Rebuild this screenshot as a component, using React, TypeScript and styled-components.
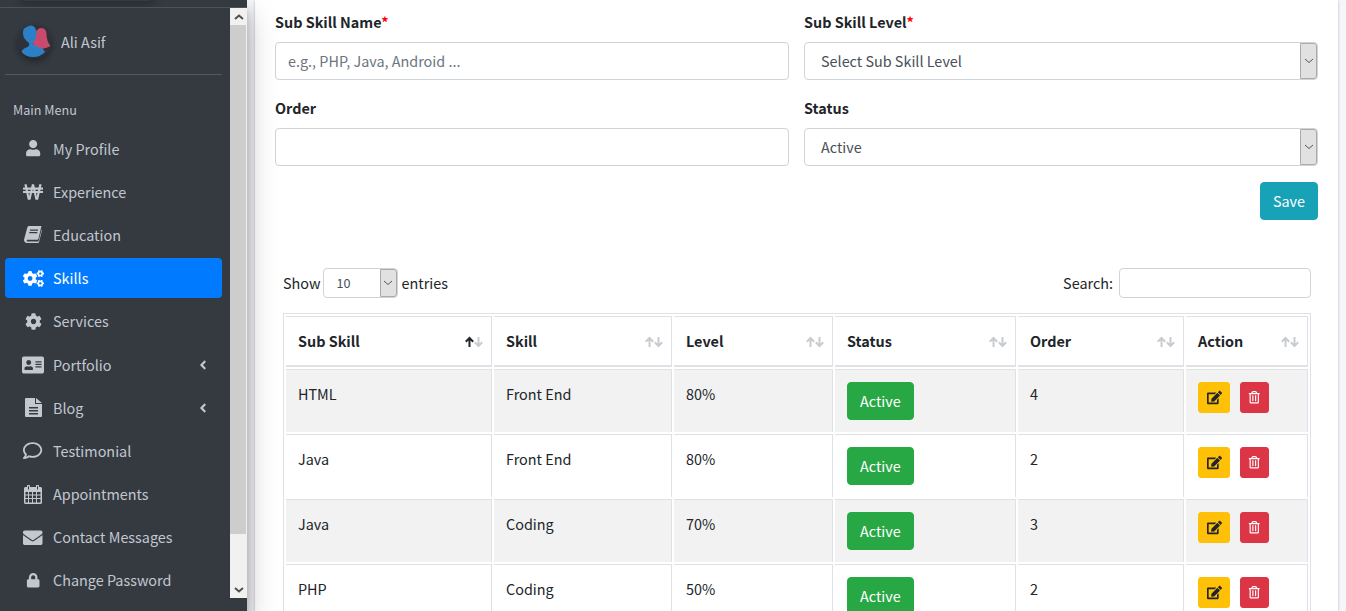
import React from "react";
import styled, { createGlobalStyle } from "styled-components";
import {
  FaUser, FaWonSign, FaCogs, FaCog, FaAddressCard, FaRegComment,
  FaEnvelope, FaLock, FaAngleLeft, FaEdit, FaRegTrashAlt,
} from "react-icons/fa";

const FONT = `"Noto Sans CJK SC", "Noto Sans", "Liberation Sans", sans-serif`;

const Global = createGlobalStyle`
  * { box-sizing: border-box; }
  html, body { margin: 0; height: 100%; overflow: hidden; }
  body { font-family: ${FONT}; font-size: 14.4px; line-height: 24px; color: #212529; background: #f4f6f9; }
`;

const Page = styled.div`
  display: flex;
  height: 611px;
  overflow: hidden;
`;

const Sidebar = styled.aside`
  position: relative;
  z-index: 2;
  flex: 0 0 247px;
  background: #343a40;
  box-shadow: 0 14px 28px rgba(0,0,0,.25), 0 10px 10px rgba(0,0,0,.22);
  display: flex;
  flex-direction: column;
`;

const Brand = styled.div`
  flex: 0 0 8px;
  border-bottom: 1px solid #4b545c;
  overflow: hidden;
`;

const BrandShadow = styled.div`
  width: 126px;
  height: 1px;
  margin: 0 0 0 24px;
  box-shadow: 0 0 8px 4px rgba(0,0,0,.25);
`;

const SideBody = styled.div`
  display: flex;
  align-items: flex-start;
  height: 603px;
`;

const SideContent = styled.div`
  flex: 0 0 230px;
  overflow: hidden;
`;

const UserPanel = styled.div`
  display: flex;
  align-items: center;
  gap: 10px;
  margin: 0 8px 0 5px;
  padding: 17px 0 16px 13px;
  border-bottom: 1px solid #4f5962;
  color: #c2c7d0;
`;

const Avatar = styled.svg`
  width: 33px;
  height: 33px;
  display: block;
  border-radius: 50%;
  box-shadow: 0 3px 6px rgba(0,0,0,.16), 0 3px 6px rgba(0,0,0,.23);
`;

const MenuTitle = styled.div`
  margin: 24px 0 8.6px 13px;
  font-size: 12.6px;
  line-height: 21px;
  color: #c2c7d0;
`;

const NavList = styled.nav`
  display: flex;
  flex-direction: column;
  gap: 3.2px;
  margin: 0 8px 0 5px;
`;

const NavItem = styled.a<{ $active?: boolean }>`
  display: flex;
  align-items: center;
  height: 40px;
  padding: 0 12px 0 8px;
  border-radius: 4px;
  color: ${(p) => (p.$active ? "#fff" : "#c2c7d0")};
  background: ${(p) => (p.$active ? "#007bff" : "transparent")};
`;

const NavIcon = styled.span`
  flex: 0 0 40px;
  display: flex;
  justify-content: center;
  align-items: center;
`;

const NavLabel = styled.span`
  flex: 1;
`;

const ScrollTrack = styled.div`
  flex: 0 0 17px;
  height: 590px;
  background: #f1f1f1;
  display: flex;
  flex-direction: column;
`;

const ScrollButton = styled.div`
  flex: 0 0 17px;
  display: flex;
  align-items: center;
  justify-content: center;
`;

const ScrollThumb = styled.div`
  flex: 0 0 509px;
  background: #cdcdcd;
  margin-right: 1px;
`;

const ScrollRest = styled.div`
  flex: 1;
`;

const Main = styled.main`
  flex: 1;
  padding-left: 8px;
  padding-right: 8px;
  min-width: 0;
`;

const Card = styled.section`
  background: #fff;
  height: 100%;
  padding: 10px 20px 0;
  box-shadow: 0 0 1px rgba(0,0,0,.125), 0 1px 3px rgba(0,0,0,.2);
  overflow: hidden;
`;

const FormGrid = styled.div`
  display: grid;
  grid-template-columns: 514px 514px;
  column-gap: 15px;
`;

const Field = styled.div`
  margin-bottom: 16px;
`;

const Label = styled.label`
  display: block;
  margin-bottom: 8px;
  font-weight: 700;
`;

const Req = styled.span`
  color: #f00;
`;

const TextInput = styled.input`
  display: block;
  width: 100%;
  height: 38px;
  padding: 5px 12px 7px;
  border: 1px solid #ced4da;
  border-radius: 4px;
  background: #fff;
  color: #495057;
  font: 14.4px/24px ${FONT};
  &::placeholder { color: #6c757d; opacity: 1; }
`;

const SelectWrap = styled.div<{ $w?: number }>`
  position: relative;
  width: ${(p) => (p.$w ? `${p.$w}px` : "100%")};
`;

const ShowSelectWrap = styled(SelectWrap)`
  margin: 0 1px 0 -1px;
`;

const NativeSelect = styled.select<{ $small?: boolean }>`
  display: block;
  width: 100%;
  height: ${(p) => (p.$small ? 30 : 38)}px;
  padding: 0 20px 0 ${(p) => (p.$small ? 13 : 16)}px;
  border: 1px solid #ced4da;
  border-radius: 4px;
  background: #fff;
  color: #495057;
  appearance: none;
  font: ${(p) => (p.$small ? 12.6 : 14.4)}px/24px ${FONT};
`;

const SelectArrow = styled.span`
  position: absolute;
  top: 1px;
  right: 1px;
  bottom: 1px;
  width: 17px;
  display: flex;
  align-items: center;
  justify-content: center;
  background: #e1e1e1;
  border: 1px solid #ababab;
  border-top-right-radius: 3px;
  border-bottom-right-radius: 3px;
`;

const Actions = styled.div`
  display: flex;
  justify-content: flex-end;
`;

const Button = styled.button<{ $bg: string; $fg?: string }>`
  height: 38px;
  padding: 0 12px;
  border: 1px solid ${(p) => p.$bg};
  border-radius: 4px;
  background: ${(p) => p.$bg};
  color: ${(p) => p.$fg || "#fff"};
  font: 14.4px/24px ${FONT};
`;

const IconButton = styled.button<{ $bg: string; $fg: string; $w: number }>`
  width: ${(p) => p.$w}px;
  height: 31px;
  padding: 0;
  border: 1px solid ${(p) => p.$bg};
  border-radius: 3px;
  background: ${(p) => p.$bg};
  color: ${(p) => p.$fg};
  display: inline-flex;
  align-items: center;
  justify-content: center;
`;

const Tools = styled.div`
  display: flex;
  justify-content: space-between;
  align-items: center;
  height: 30px;
  margin: 48px 7px 15px 8px;
`;

const ToolGroup = styled.label`
  display: flex;
  align-items: center;
  gap: 3px;
`;

const SearchInput = styled(TextInput)`
  width: 192px;
  height: 30px;
  margin-left: 3px;
`;

const Table = styled.table`
  table-layout: fixed;
  width: 1028px;
  margin-left: 8px;
  border: 1px solid #dee2e6;
  border-collapse: separate;
  border-spacing: 2px;
`;

const Th = styled.th<{ $w: number }>`
  position: relative;
  width: ${(p) => p.$w}px;
  height: 51px;
  padding: 12px;
  text-align: left;
  vertical-align: middle;
  font-weight: 700;
  border-top: 1px solid #dee2e6;
  border-right: 1px solid #dee2e6;
  border-bottom: 2px solid #dee2e6;
`;

const SortMark = styled.svg`
  position: absolute;
  right: 8px;
  top: 19px;
  width: 18px;
  height: 12px;
`;

const Row = styled.tr<{ $odd: boolean }>`
  background: ${(p) => (p.$odd ? "#f2f2f2" : "transparent")};
`;

const Td = styled.td`
  height: 63px;
  padding: 12px;
  vertical-align: top;
  border-top: 1px solid #dee2e6;
  border-right: 1px solid #dee2e6;
  background: inherit;
`;

const ActionCell = styled.div`
  display: flex;
  gap: 10px;
`;

const Chevron = ({ up, dark }: { up?: boolean; dark?: boolean }) => (
  <svg width="10" height="6" viewBox="0 0 10 6" fill="none">
    <path
      d={up ? "M1 5L5 1.5L9 5" : "M1 1L5 4.5L9 1"}
      stroke={dark ? "#505050" : "#555"}
      strokeWidth={dark ? 2 : 1}
    />
  </svg>
);

const Sort = ({ active }: { active?: boolean }) => (
  <SortMark viewBox="0 0 18 12" fill="none" strokeWidth="2">
    <path d="M4.500 11V2M.8 5.700L4.500 2L8.200 5.700" stroke={active ? "#212529" : "#c8ccd0"} />
    <path d="M13.500 1V10M9.800 6.300L13.500 10L17.200 6.300" stroke="#c8ccd0" />
  </SortMark>
);

const BlogIcon = () => (
  <svg width="17" height="19" viewBox="0 0 17 19">
    <path
      fill="#c2c7d0"
      fillRule="evenodd"
      d="M1 0H10V6H17V18A1 1 0 0 1 16 19H1A1 1 0 0 1 0 18V1A1 1 0 0 1 1 0ZM11 0L17 5H11ZM4 9V10.500H13V9ZM4 12V13.500H13V12ZM4 15V16.500H13V15Z"
    />
  </svg>
);

const BookIcon = () => (
  <svg width="18" height="17" viewBox="0 0 18 17">
    <path
      fill="#c2c7d0"
      fillRule="evenodd"
      d="M5 0H17.500L14.500 12.500C14.300 13.300 13.700 13.800 13 13.800H3.500C2.500 13.800 2.400 15.500 3.500 15.500H14.500L17.700 3.500L18 4.500L15 16C14.900 16.600 14.400 17 13.800 17H3C1 17 -.5 15 .2 13L3.300 1.500C3.600 .6 4.200 0 5 0ZM6 3.500V4.700H14V3.500ZM5.300 6V7.200H13.300V6Z"
    />
  </svg>
);

const CalendarIcon = () => (
  <svg width="18" height="19" viewBox="0 0 18 19">
    <path
      fill="#c2c7d0"
      fillRule="evenodd"
      d="M3 2V1A1 1 0 0 1 6 1V2H12V1A1 1 0 0 1 15 1V2H16.500C17.300 2 18 2.700 18 3.500V17.500C18 18.300 17.300 19 16.500 19H1.500C.7 19 0 18.300 0 17.500V3.500C0 2.700 .7 2 1.500 2ZM4 1.200V4.500H5V1.200ZM13 1.200V4.500H14V1.200ZM1.500 7V9.500H4V7ZM5 7V9.500H8V7ZM9 7V9.500H12V7ZM13 7V9.500H16.500V7ZM1.500 10.500V13H4V10.500ZM5 10.500V13H8V10.500ZM9 10.500V13H12V10.500ZM13 10.500V13H16.500V10.500ZM1.500 14V17.500H4V14ZM5 14V17.500H8V14ZM9 14V17.500H12V14ZM13 14V17.500H16.500V14Z"
    />
  </svg>
);

const nav: { label: string; icon: React.ReactNode; active?: boolean; sub?: boolean }[] = [
  { label: "My Profile", icon: <FaUser size={16.3} /> },
  { label: "Experience", icon: <FaWonSign size={20} /> },
  { label: "Education", icon: <BookIcon /> },
  { label: "Skills", icon: <FaCogs size={21} />, active: true },
  { label: "Services", icon: <FaCog size={17} /> },
  { label: "Portfolio", icon: <FaAddressCard size={22} />, sub: true },
  { label: "Blog", icon: <BlogIcon />, sub: true },
  { label: "Testimonial", icon: <FaRegComment size={19.2} /> },
  { label: "Appointments", icon: <CalendarIcon /> },
  { label: "Contact Messages", icon: <FaEnvelope size={19.5} /> },
  { label: "Change Password", icon: <FaLock size={14.4} /> },
];

const columns = [
  { t: "Sub Skill", w: 206 },
  { t: "Skill", w: 178 },
  { t: "Level", w: 159 },
  { t: "Status", w: 181 },
  { t: "Order", w: 166 },
  { t: "Action", w: 122 },
];

const rows = [
  ["HTML", "Front End", "80%", "4"],
  ["Java", "Front End", "80%", "2"],
  ["Java", "Coding", "70%", "3"],
  ["PHP", "Coding", "50%", "2"],
];

export default function App() {
  return (
    <Page>
      <Global />
      <Sidebar>
        <Brand>
          <BrandShadow />
        </Brand>
        <SideBody>
          <SideContent>
            <UserPanel>
              <Avatar viewBox="0 0 33 33">
                <circle cx="16.500" cy="16.500" r="16.500" fill="#2d3238" />
                <path fill="#c94a6c" d="M23 3C27 3 28.500 6 28.500 9C28.500 14 30 18 32.500 21C29 23 26 23.500 24 24L25 27L17 24L14 14C17 8 19 3 23 3Z" />
                <path fill="#2b80c8" d="M11.500 0C16 0 18.500 3.500 18.500 8.500C18.500 12.500 17 15.500 15 17.500C15 20 17 21 20 22C23.500 23 26 24.500 27 27C24 30 20 32 15 32C10 32 6 30 3 27.500C4.500 24 7 23 9.500 22C11.500 21 11.500 19 11 18C7.500 15.500 5 12.500 5 8.500C5 3.500 7 0 11.500 0Z" />
              </Avatar>
              Ali Asif
            </UserPanel>
            <MenuTitle>Main Menu</MenuTitle>
            <NavList>
              {nav.map((n) => (
                <NavItem key={n.label} $active={n.active}>
                  <NavIcon>{n.icon}</NavIcon>
                  <NavLabel>{n.label}</NavLabel>
                  {n.sub && <FaAngleLeft size={14} />}
                </NavItem>
              ))}
            </NavList>
          </SideContent>
          <ScrollTrack>
            <ScrollButton>
              <Chevron up dark />
            </ScrollButton>
            <ScrollThumb />
            <ScrollRest />
            <ScrollButton>
              <Chevron dark />
            </ScrollButton>
          </ScrollTrack>
        </SideBody>
      </Sidebar>
      <Main>
        <Card>
          <FormGrid>
            <Field>
              <Label>Sub Skill Name<Req>*</Req></Label>
              <TextInput placeholder="e.g., PHP, Java, Android ..." />
            </Field>
            <Field>
              <Label>Sub Skill Level<Req>*</Req></Label>
              <SelectWrap>
                <NativeSelect defaultValue="">
                  <option value="">Select Sub Skill Level</option>
                </NativeSelect>
                <SelectArrow><Chevron /></SelectArrow>
              </SelectWrap>
            </Field>
            <Field>
              <Label>Order</Label>
              <TextInput />
            </Field>
            <Field>
              <Label>Status</Label>
              <SelectWrap>
                <NativeSelect defaultValue="Active">
                  <option value="Active">Active</option>
                </NativeSelect>
                <SelectArrow><Chevron /></SelectArrow>
              </SelectWrap>
            </Field>
          </FormGrid>
          <Actions>
            <Button $bg="#17a2b8">Save</Button>
          </Actions>
          <Tools>
            <ToolGroup>
              Show
              <ShowSelectWrap $w={75}>
                <NativeSelect $small defaultValue="10">
                  <option value="10">10</option>
                </NativeSelect>
                <SelectArrow><Chevron /></SelectArrow>
              </ShowSelectWrap>
              entries
            </ToolGroup>
            <ToolGroup>
              Search:
              <SearchInput />
            </ToolGroup>
          </Tools>
          <Table>
            <thead>
              <tr>
                {columns.map((c, i) => (
                  <Th key={c.t} $w={c.w}>
                    {c.t}
                    <Sort active={i === 0} />
                  </Th>
                ))}
              </tr>
            </thead>
            <tbody>
              {rows.map((r, i) => (
                <Row key={i} $odd={i % 2 === 0}>
                  <Td>{r[0]}</Td>
                  <Td>{r[1]}</Td>
                  <Td>{r[2]}</Td>
                  <Td><Button $bg="#28a745">Active</Button></Td>
                  <Td>{r[3]}</Td>
                  <Td>
                    <ActionCell>
                      <IconButton $bg="#ffc107" $fg="#212529" $w={32}><FaEdit size={15} /></IconButton>
                      <IconButton $bg="#dc3545" $fg="#fff" $w={29}><FaRegTrashAlt size={12.5} /></IconButton>
                    </ActionCell>
                  </Td>
                </Row>
              ))}
            </tbody>
          </Table>
        </Card>
      </Main>
    </Page>
  );
}
